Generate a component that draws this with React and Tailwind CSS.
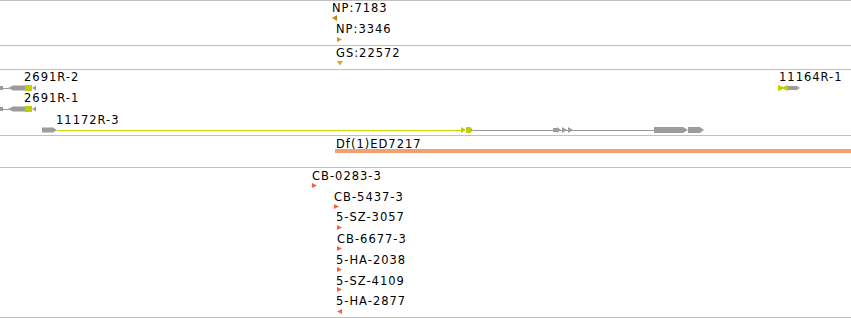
import React from "react";

const G = "#9c9c9c";
const Y = "#bfcf00";

export default function App() {
  return (
    <div className="w-[851px] h-[318px] bg-white overflow-hidden flex flex-col font-['DejaVu_Sans',sans-serif] text-[11.5px] leading-[13px] tracking-[1px] text-black">
      {/* Track A */}
      <div className="relative h-[45px] shrink-0 border-t border-[#c0c0c0]">
        <svg className="absolute inset-0" width="851" height="44">
          <polygon points="332,17 337,14 337,20" fill="#c88a00" />
          <polygon points="337,36 342,38.5 337,41" fill="#d69a10" />
        </svg>
        <span className="absolute left-[332px] top-[1px] whitespace-nowrap">NP:7183</span>
        <span className="absolute left-[336px] top-[22px] whitespace-nowrap">NP:3346</span>
      </div>

      {/* Track B */}
      <div className="relative h-[24px] shrink-0 border-t border-[#c0c0c0]">
        <svg className="absolute inset-0" width="851" height="23">
          <polygon points="337,15 343,15 340,19.5" fill="#f0a020" />
        </svg>
        <span className="absolute left-[336px] top-[1px] whitespace-nowrap">GS:22572</span>
      </div>

      {/* Track C genes */}
      <div className="relative h-[66px] shrink-0 border-t border-[#c0c0c0]">
        <svg className="absolute inset-0" width="851" height="65">
          {[15, 36].map((t) => (
            <g key={t}>
              <rect x="0" y={t + 1} width="3" height="4" fill={G} />
              <rect x="3" y={t + 3} width="6" height="1" fill={G} />
              <polygon points={`8,${t + 3} 13,${t + 0.5} 25,${t + 0.5} 25,${t + 5.5} 13,${t + 5.5}`} fill={G} />
              <rect x="25" y={t} width="7" height="6" fill={Y} />
              <polygon points={`32,${t + 3} 36,${t + 0.5} 36,${t + 5.5}`} fill={G} />
            </g>
          ))}
          {/* 11164R-1 */}
          <polygon points="778,15 783,17 788,15 788,21 783,19 778,21" fill={Y} />
          <rect x="788" y="16" width="8" height="4" fill={G} />
          <polygon points="796,15.5 800,18 796,20.5" fill={G} />

          {/* 11172R-3 */}
          <rect x="42" y="57.5" width="10" height="5" fill={G} />
          <polygon points="52,57 57,60 52,63" fill={G} />
          <rect x="57" y="60" width="404" height="1" fill="#cad800" />
          <polygon points="461,57 466,60 461,63" fill={Y} />
          <rect x="466" y="57" width="5" height="6" rx="1" fill={Y} />
          <polygon points="471,58 473,60 471,62" fill={G} />
          <rect x="473" y="60" width="181" height="1" fill="#999999" />
          <rect x="553" y="58" width="4" height="4" fill={G} />
          <polygon points="557,57 561,60 557,63" fill={G} />
          <polygon points="562,57 567,60 562,63" fill={G} />
          <polygon points="568,57 573,60 568,63" fill={G} />
          <rect x="654" y="57" width="29" height="6" fill={G} />
          <polygon points="683,57 688,60 683,63" fill={G} />
          <rect x="688" y="57" width="12" height="6" fill={G} />
          <polygon points="700,57 704,60 700,63" fill={G} />
        </svg>
        <span className="absolute left-[24px] top-[1px] whitespace-nowrap">2691R-2</span>
        <span className="absolute left-[24px] top-[22px] whitespace-nowrap">2691R-1</span>
        <span className="absolute left-[56px] top-[44px] whitespace-nowrap">11172R-3</span>
        <span className="absolute left-[779px] top-[1px] whitespace-nowrap">11164R-1</span>
      </div>

      {/* Track D */}
      <div className="relative h-[32px] shrink-0 border-t border-[#c0c0c0]">
        <svg className="absolute inset-0" width="851" height="31">
          <rect x="335" y="13" width="516" height="4" fill="#f2a070" />
        </svg>
        <span className="absolute left-[336px] top-[2px] whitespace-nowrap">Df(1)ED7217</span>
      </div>

      {/* Track E */}
      <div className="relative h-[151px] shrink-0 border-y border-[#c0c0c0]">
        <svg className="absolute inset-0" width="851" height="149">
          <polygon points="312,15 317,17.5 312,20" fill="#f26440" />
          <polygon points="334,36 339,38.5 334,41" fill="#f26440" />
          <polygon points="337,57 342,59.5 337,62" fill="#f26440" />
          <polygon points="337,78 342,80.5 337,83" fill="#f26440" />
          <polygon points="337,99 342,101.5 337,104" fill="#f26440" />
          <polygon points="337,119 342,121.5 337,124" fill="#f26440" />
          <polygon points="337,143.5 342,141 342,146" fill="#f26440" />
        </svg>
        <span className="absolute left-[312px] top-[2px] whitespace-nowrap">CB-0283-3</span>
        <span className="absolute left-[334px] top-[23px] whitespace-nowrap">CB-5437-3</span>
        <span className="absolute left-[336px] top-[43px] whitespace-nowrap">5-SZ-3057</span>
        <span className="absolute left-[337px] top-[65px] whitespace-nowrap">CB-6677-3</span>
        <span className="absolute left-[336px] top-[86px] whitespace-nowrap">5-HA-2038</span>
        <span className="absolute left-[336px] top-[107px] whitespace-nowrap">5-SZ-4109</span>
        <span className="absolute left-[336px] top-[127px] whitespace-nowrap">5-HA-2877</span>
      </div>
    </div>
  );
}
